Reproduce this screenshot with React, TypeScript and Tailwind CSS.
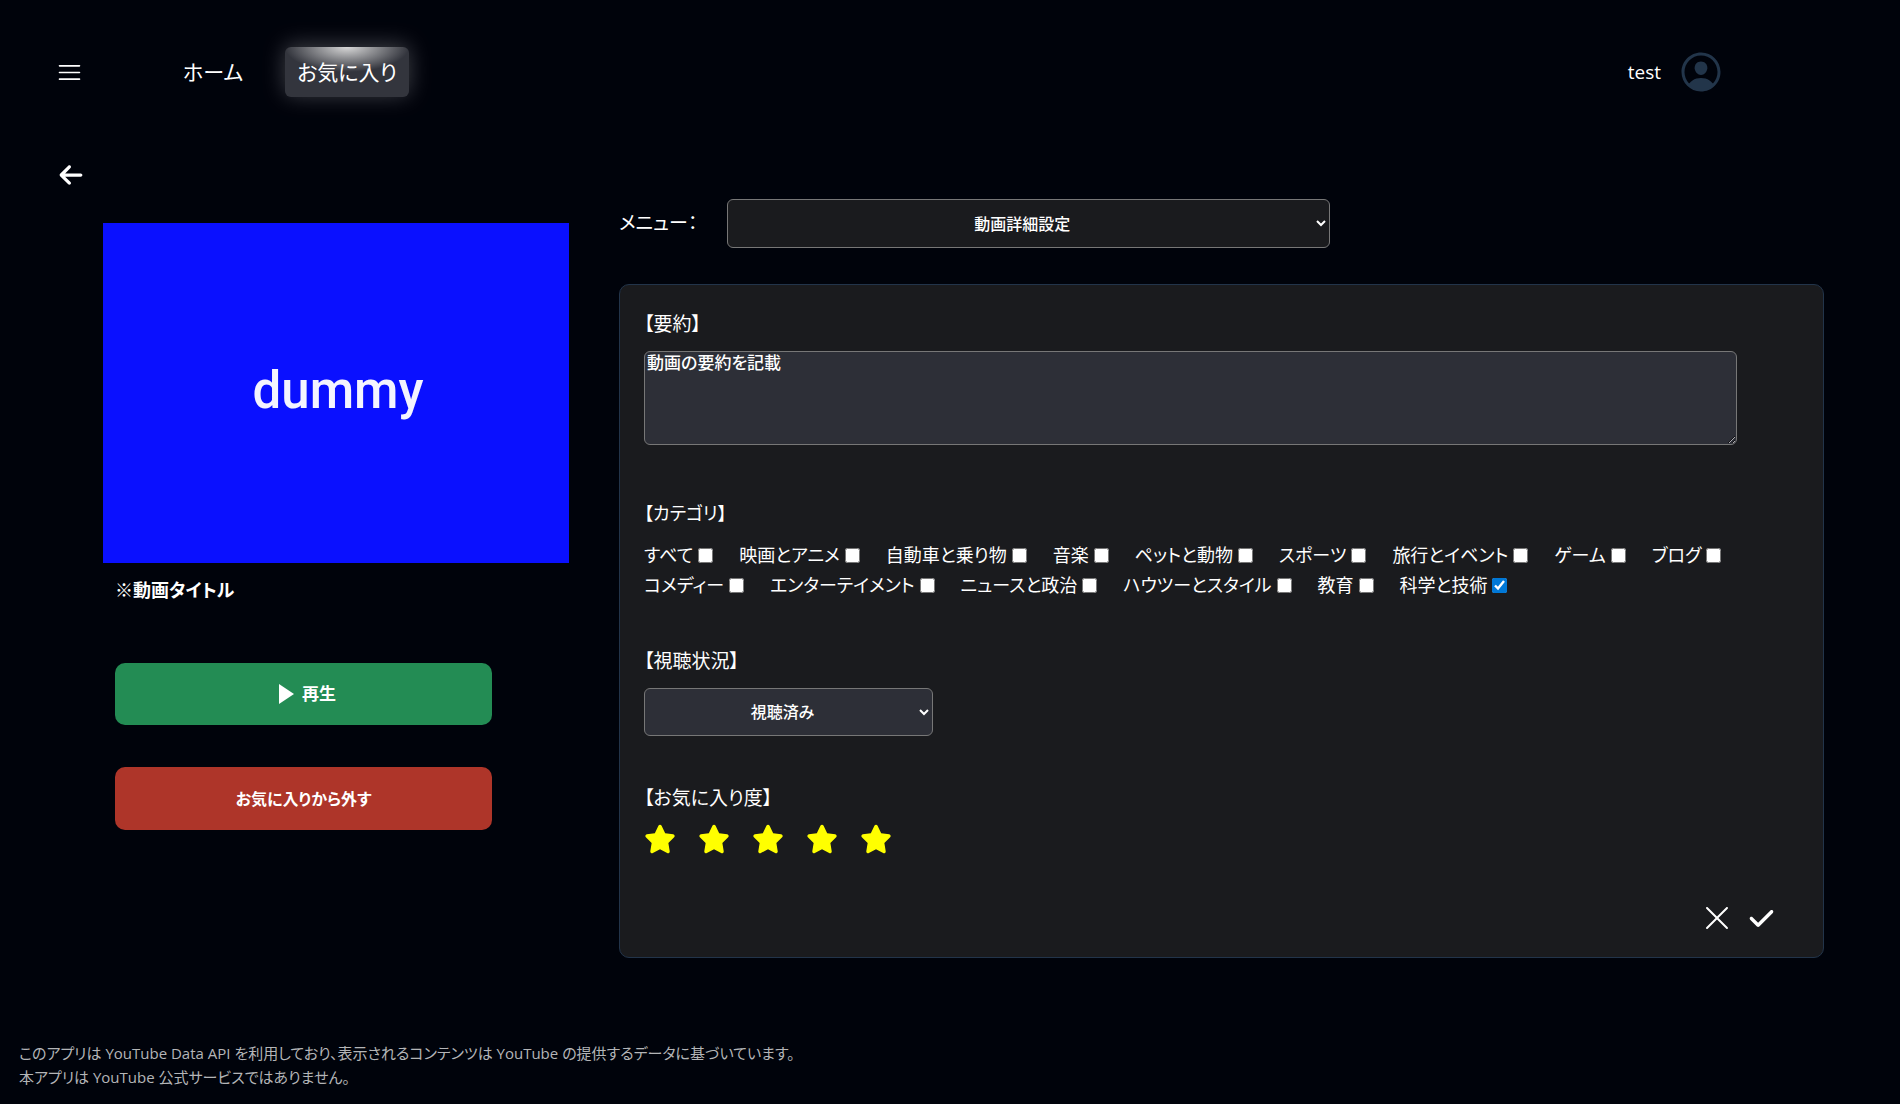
import { useState } from "react";
import { RxHamburgerMenu, RxCross1 } from "react-icons/rx";
import { FaArrowLeft, FaCheck, FaStar } from "react-icons/fa6";
import { IoPersonCircleOutline } from "react-icons/io5";

const categories = [
  "すべて",
  "映画とアニメ",
  "自動車と乗り物",
  "音楽",
  "ペットと動物",
  "スポーツ",
  "旅行とイベント",
  "ゲーム",
  "ブログ",
  "コメディー",
  "エンターテイメント",
  "ニュースと政治",
  "ハウツーとスタイル",
  "教育",
  "科学と技術",
];

function Header() {
  return (
    <header className="flex h-36 items-center pl-[57px] pr-[175px]">
      <button type="button" aria-label="メニューを開く">
        <RxHamburgerMenu size={25} />
      </button>
      <nav className="ml-[89px] flex items-center gap-[30px] text-[21px] leading-[50px]">
        <a href="#home" className="px-3">
          ホーム
        </a>
        <a
          href="#favorites"
          className="rounded-md bg-[#33353d] bg-[radial-gradient(50%_50%_at_top,#d8d8d8_0%,#33353d_100%)] px-3 shadow-[0_-2px_22px_rgba(255,255,255,0.25)]"
        >
          お気に入り
        </a>
      </nav>
      <div className="ml-auto flex items-center gap-4 text-[19px]">
        <span>test</span>
        <button type="button" aria-label="アカウント" className="text-[#22354a]">
          <IoPersonCircleOutline size={48} />
        </button>
      </div>
    </header>
  );
}

function VideoColumn() {
  return (
    <section className="pt-6">
      <div className="flex h-[340px] items-center justify-center bg-[#0a10ff] pb-1 pl-1 font-[Roboto] text-[51px] font-medium text-[#f4f4ff]">
        dummy
      </div>
      <h1 className="ml-3 mt-3 text-[18px] leading-[30px] font-bold">※動画タイトル</h1>
      <div className="ml-3 mr-[77px] mt-[58px] flex flex-col gap-[42px] text-base font-bold">
        <button
          type="button"
          className="flex h-[62px] items-center justify-center gap-2 rounded-[10px] bg-[#238c54] pl-2 text-[17px]"
        >
          <svg width="15" height="20" viewBox="0 0 15 20" fill="currentColor" aria-hidden="true">
            <path d="M0 0 15 10 0 20Z" />
          </svg>
          再生
        </button>
        <button type="button" className="h-[63px] rounded-[10px] bg-[#ae3529]">
          お気に入りから外す
        </button>
      </div>
    </section>
  );
}

function CategoryList() {
  const [selected, setSelected] = useState<string[]>(["科学と技術"]);
  const toggle = (name: string) =>
    setSelected((prev) => (prev.includes(name) ? prev.filter((n) => n !== name) : [...prev, name]));

  return (
    <div className="flex w-[94.6%] flex-wrap gap-x-[26px] text-[18px] leading-[30px]">
      {categories.map((name) => (
        <label key={name} className="flex items-center gap-[5px] whitespace-nowrap">
          {name}
          <input
            type="checkbox"
            className="size-[15px] accent-[#0078d7]"
            checked={selected.includes(name)}
            onChange={() => toggle(name)}
          />
        </label>
      ))}
    </div>
  );
}

function DetailPanel() {
  const [rating, setRating] = useState(5);

  return (
    <form className="rounded-[10px] border border-[#22344a] bg-[#1a1b1e] px-6 pt-6 pb-6 text-[19px]">
      <label htmlFor="summary" className="mb-3 block leading-[30px]">
        【要約】
      </label>
      <textarea
        id="summary"
        defaultValue="動画の要約を記載"
        className="mb-[53px] block h-[94px] w-[94.6%] rounded-md border border-[#777] bg-[#2d2f37] px-[2px] text-[17px] leading-[22px] font-medium"
      />

      <fieldset className="mb-[46px]">
        <legend className="mb-3 text-[18px] leading-[30px]">【カテゴリ】</legend>
        <CategoryList />
      </fieldset>

      <label htmlFor="status" className="mb-3 block leading-[30px]">
        【視聴状況】
      </label>
      <select
        id="status"
        defaultValue="視聴済み"
        className="mb-[47px] block h-12 w-[289px] rounded-md border border-[#777] bg-[#2d2f37] text-center text-base font-medium"
      >
        <option>視聴済み</option>
        <option>未視聴</option>
      </select>

      <h2 className="mb-[10px] leading-[30px]">【お気に入り度】</h2>
      <div className="mb-12 flex gap-[22px]">
        {[1, 2, 3, 4, 5].map((n) => (
          <button
            key={n}
            type="button"
            aria-label={`お気に入り度 ${n}`}
            onClick={() => setRating(n)}
            className={n <= rating ? "text-[#ffff00]" : "text-gray-500"}
          >
            <FaStar size={32} />
          </button>
        ))}
      </div>

      <div className="mr-6 flex items-center justify-end gap-4">
        <button type="button" aria-label="キャンセル">
          <RxCross1 size={30} />
        </button>
        <button type="button" aria-label="保存">
          <FaCheck size={27} />
        </button>
      </div>
    </form>
  );
}

export default function App() {
  return (
    <div className="flex min-h-screen flex-col bg-[#00030b] font-['Open_Sans','Noto_Sans_CJK_JP',sans-serif] text-white [font-feature-settings:'palt']">
      <Header />
      <div className="h-[55px] pl-[58px] pt-[18px]">
        <button type="button" aria-label="戻る" className="block">
          <FaArrowLeft size={26} />
        </button>
      </div>
      <main className="grid grid-cols-[466fr_1205fr] gap-[50px] pl-[103px] pr-[76px]">
        <VideoColumn />
        <section>
          <div className="mb-9 flex items-center">
            <label htmlFor="menu" className="w-[108px] text-[19px]">
              メニュー：
            </label>
            <select
              id="menu"
              defaultValue="動画詳細設定"
              className="h-[49px] w-1/2 rounded-md border border-[#777] bg-[#1a1b1e] text-center text-base font-medium"
            >
              <option>動画詳細設定</option>
            </select>
          </div>
          <DetailPanel />
        </section>
      </main>
      <footer className="mt-auto pb-[15px] pl-[19px] text-[15px] leading-6 text-[#b4b5b7]">
        <p>
          このアプリは YouTube Data API を利用しており、表示されるコンテンツは YouTube の提供するデータに基づいています。
        </p>
        <p>本アプリは YouTube 公式サービスではありません。</p>
      </footer>
    </div>
  );
}
